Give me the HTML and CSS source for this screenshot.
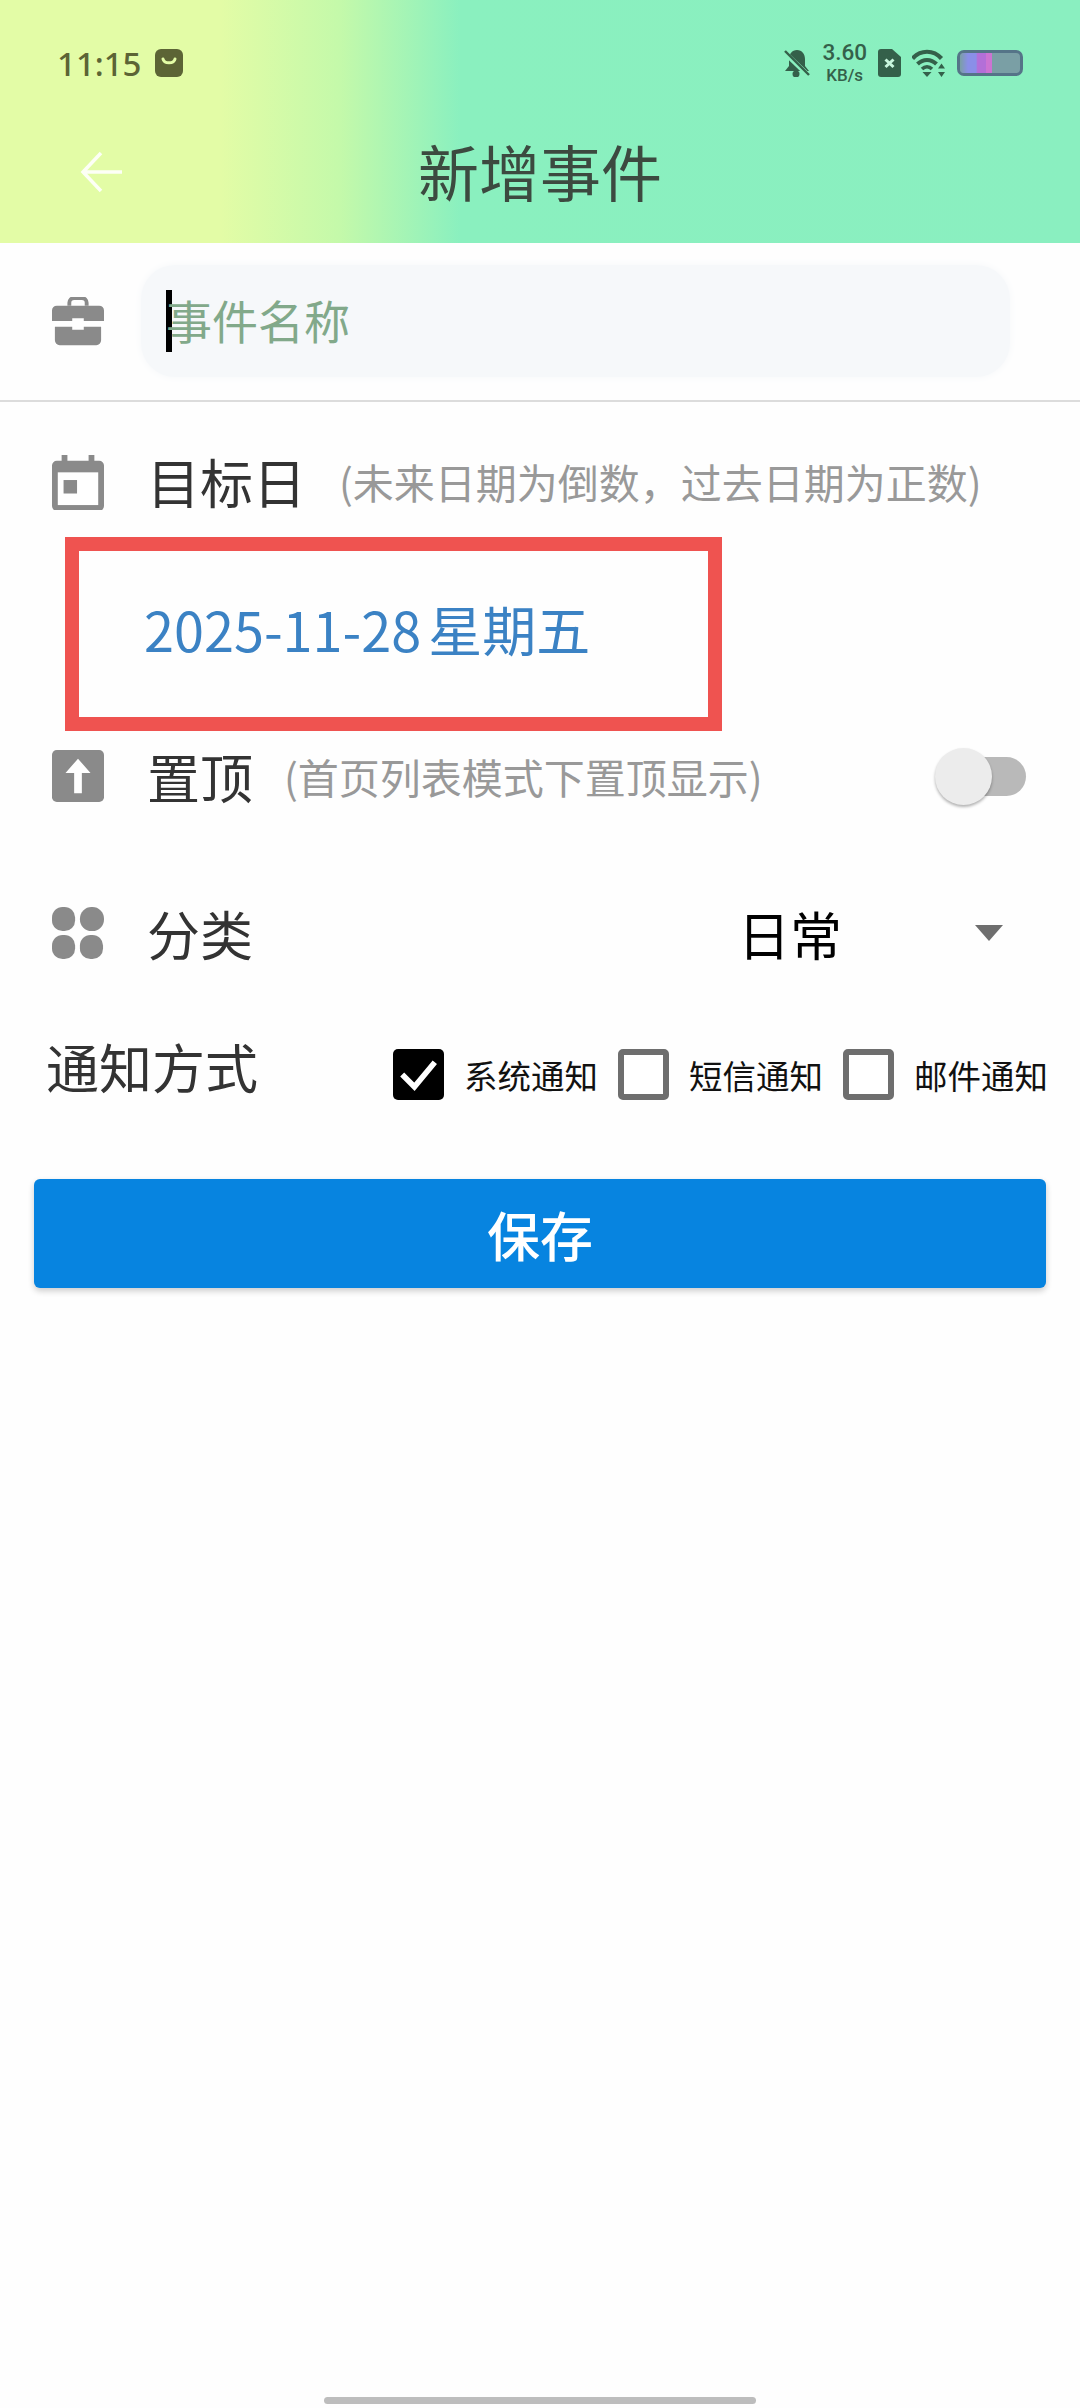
FILE: index.html
```html
<!DOCTYPE html>
<html lang="zh-CN">
<head>
    <meta charset="UTF-8">
    <meta name="viewport" content="width=device-width, initial-scale=1.0">
    <title>新增事件</title>
    <link rel="stylesheet" href="styles.css">
</head>
<body>
    <div class="header">
        <div class="status-bar">
            <div class="status-left">
                <span class="time">11:15</span>
                <svg class="bag-icon" viewBox="0 0 28 28"><rect width="28" height="28" rx="6" fill="#5c6435"/><path d="M8 10c1 5 11 5 12 0" fill="none" stroke="#e3fca6" stroke-width="3" stroke-linecap="round"/></svg>
            </div>
            <div class="status-right">
                <svg class="bell-icon" viewBox="0 0 26 28"><path d="M13 1c-5 0-8 4-8 9v7l-4 5h24l-4-5v-7c0-5-3-9-8-9z" fill="#34604a"/><circle cx="12" cy="25" r="3.5" fill="#34604a"/><path d="M0 3l25 24" stroke="#8af0bf" stroke-width="5"/><path d="M1 2l24 24" stroke="#34604a" stroke-width="2.4"/></svg>
                <div class="speed">
                    <span class="speed-num">3.60</span>
                    <span class="speed-unit">KB/s</span>
                </div>
                <svg class="sim-icon" viewBox="0 0 23 28"><path d="M3 0h11l9 8v17a3 3 0 0 1-3 3H3a3 3 0 0 1-3-3V3a3 3 0 0 1 3-3z" fill="#34604a"/><path d="M7.500 10.500l8 7.500M15.500 10.500l-8 7.500" stroke="#c8f5dd" stroke-width="3"/></svg>
                <svg class="wifi-icon" viewBox="0 0 34 28"><path d="M0.500 9.500C8.500 0.500 21.500 0.500 29.500 9.500" fill="none" stroke="#34604a" stroke-width="4.200"/><path d="M5.500 15C11 9.500 19 9.500 24.500 15" fill="none" stroke="#34604a" stroke-width="4"/><path d="M10 20c3-2.800 7-2.800 10 0" fill="none" stroke="#34604a" stroke-width="3.600"/><path d="M10.500 23h9l-4.500 5z" fill="#34604a"/><path d="M29.500 14.500l3.500 5h-7zM29.500 28l3.500-5h-7z" fill="#34604a"/></svg>
                <div class="battery">
                    <span class="battery-fill"></span>
                </div>
            </div>
        </div>
        <div class="title-bar">
            <svg class="back-icon" viewBox="0 0 44 44"><path d="M42 22H3M21 3L3 22l18 19" fill="none" stroke="#fff" stroke-opacity="0.9" stroke-width="3.500"/></svg>
            <h1 class="title">新增事件</h1>
            <span></span>
        </div>
    </div>

    <div class="name-row">
        <svg class="row-icon" viewBox="0 0 54 50"><path d="M18 9V6a5 5 0 0 1 5-5h8a5 5 0 0 1 5 5v3" fill="none" stroke="#8a8a8a" stroke-width="4"/><path d="M5 9h44a5 5 0 0 1 5 5v11H33v-3H21v3H0V14a5 5 0 0 1 5-5z" fill="#8a8a8a"/><path d="M3 31h18v3h12v-3h18v14a5 5 0 0 1-5 5H8a5 5 0 0 1-5-5z" fill="#8a8a8a"/></svg>
        <div class="name-input">
            <span class="caret"></span>
            <span class="placeholder">事件名称</span>
        </div>
    </div>

    <div class="row target-row">
        <svg class="row-icon calendar-icon" viewBox="0 0 54 58"><path d="M10 0h6v6h22V0h6v6h5a5 5 0 0 1 5 5v42a5 5 0 0 1-5 5H5a5 5 0 0 1-5-5V11a5 5 0 0 1 5-5h5z" fill="#8a8a8a"/><rect x="6" y="18" width="42" height="34" fill="#fff"/><rect x="12" y="26" width="14" height="14" fill="#8a8a8a"/></svg>
        <span class="label">目标日</span>
        <span class="hint target-hint">(未来日期为倒数，过去日期为正数)</span>
    </div>

    <div class="date-box">
        <span class="date-text">2025-11-28 星期五</span>
    </div>

    <div class="row pin-row">
        <svg class="row-icon" viewBox="0 0 54 54"><rect width="54" height="54" rx="5" fill="#8a8a8a"/><path d="M27 9l13 15h-9v21h-8V24h-9z" fill="#fff"/></svg>
        <span class="label">置顶</span>
        <span class="hint pin-hint">(首页列表模式下置顶显示)</span>
        <div class="switch">
            <span class="switch-thumb"></span>
        </div>
    </div>

    <div class="row category-row">
        <svg class="row-icon" viewBox="0 0 54 54"><rect width="24" height="25" rx="11" fill="#8a8a8a"/><rect x="29" width="25" height="25" rx="12" fill="#8a8a8a"/><rect y="29" width="24" height="25" rx="11" fill="#8a8a8a"/><rect x="29" y="29" width="24" height="25" rx="11" fill="#8a8a8a"/></svg>
        <span class="label">分类</span>
        <span class="category-value">日常</span>
        <span class="dropdown-arrow"></span>
    </div>

    <div class="notify-row">
        <span class="label notify-label">通知方式</span>
        <div class="notify-options">
            <div class="notify-option">
                <span class="checkbox checked">
                    <svg viewBox="0 0 50 50"><path d="M9 25l12 12L41 13" fill="none" stroke="#fff" stroke-width="5.500"/></svg>
                </span>
                <span class="notify-text">系统通知</span>
            </div>
            <div class="notify-option">
                <span class="checkbox"></span>
                <span class="notify-text">短信通知</span>
            </div>
            <div class="notify-option">
                <span class="checkbox"></span>
                <span class="notify-text">邮件通知</span>
            </div>
        </div>
    </div>

    <button class="save-btn">保存</button>

    <div class="home-indicator"></div>
</body>
</html>
```

FILE: styles.css
```css
body {
    font-family: "Noto Sans CJK SC", "Noto Sans", sans-serif;
    margin: 0;
    width: 1080px;
    height: 2408px;
    position: relative;
    overflow: hidden;
    background-color: #fefefe;
}
.header {
    height: 243px;
    background: linear-gradient(90deg, #e3fca6 0, #e3fca6 220px, #c4f9aa 340px, #8af0bf 460px, #8aefc0 100%);
}
.status-bar {
    height: 126px;
    display: flex;
    align-items: center;
    justify-content: space-between;
    padding: 0 57px;
}
.status-left {
    display: flex;
    align-items: center;
    gap: 14px;
}
.time {
    font-family: "Noto Sans", sans-serif;
    font-size: 33px;
    font-weight: 500;
    color: #5c6435;
}
.bag-icon {
    width: 28px;
    height: 28px;
}
.status-right {
    display: flex;
    align-items: center;
}
.bell-icon {
    width: 26px;
    height: 28px;
}
.speed {
    display: flex;
    flex-direction: column;
    align-items: center;
    margin: 0 11px 0 12px;
    font-family: Roboto, sans-serif;
    color: #34604a;
    font-weight: 500;
}
.speed-num {
    font-size: 22.500px;
    line-height: 24px;
}
.speed-unit {
    font-size: 17px;
    line-height: 23px;
}
.sim-icon {
    width: 23px;
    height: 28px;
}
.wifi-icon {
    width: 34px;
    height: 28px;
    margin-left: 11px;
}
.battery {
    width: 66px;
    height: 26px;
    margin-left: 11px;
    box-sizing: border-box;
    border: 3px solid #557488;
    border-radius: 7px;
    background-color: #7a9fa5;
    overflow: hidden;
}
.battery-fill {
    display: block;
    width: 32px;
    height: 100%;
    background: linear-gradient(90deg, #7a9fa5 0, #8a8fe8 25%, #8a8fe8 50%, #b36fd8 55%, #b36fd8 80%, #cc74d2 82%);
}
.title-bar {
    display: grid;
    grid-template-columns: 1fr auto 1fr;
    align-items: center;
    height: 100px;
}
.back-icon {
    width: 44px;
    height: 44px;
    margin: -9px 0 0 80px;
}
.title {
    margin: 0;
    padding-bottom: 10px;
    font-size: 61px;
    font-weight: 400;
    line-height: 90px;
    color: #3c4a40;
}
.name-row {
    height: 159px;
    box-sizing: border-box;
    border-bottom: 2px solid #dcdcdc;
    display: flex;
    align-items: center;
    padding: 0 70px 0 52px;
}
.row-icon {
    width: 52px;
    flex-shrink: 0;
}
.name-input {
    flex: 1;
    height: 112px;
    margin: -2px 0 0 37px;
    display: flex;
    align-items: center;
    padding-left: 25px;
    background-color: #f6f8fa;
    border-radius: 34px;
    box-shadow: 0 0 8px #f6f8fa;
}
.caret {
    width: 6px;
    height: 62px;
    background-color: #000;
}
.placeholder {
    font-size: 46px;
    color: #82a98a;
    margin: -3px 0 0 -6px;
}
.row {
    display: flex;
    align-items: center;
    padding: 0 52px;
}
.label {
    font-size: 53px;
    line-height: 60px;
    color: #333;
}
.hint {
    font-size: 41px;
    color: #999;
}
.target-row {
    height: 135px;
    box-sizing: border-box;
    padding-top: 22px;
}
.calendar-icon {
    margin-top: 4px;
}
.target-row .label {
    margin-left: 43px;
}
.target-hint {
    margin-left: 33px;
}
.date-box {
    width: 657px;
    height: 194px;
    margin-left: 65px;
    box-sizing: border-box;
    border: 14px solid #ef5350;
    display: flex;
    align-items: center;
    padding: 0 0 12px 65px;
}
.date-text {
    font-size: 54px;
    color: #3b82c4;
    word-spacing: -5px;
}
.pin-row {
    height: 90px;
}
.pin-row .label {
    margin-left: 43px;
}
.pin-hint {
    margin-left: 31px;
}
.switch {
    position: relative;
    width: 80px;
    height: 39px;
    margin-left: auto;
    margin-right: 2px;
    border-radius: 20px;
    background-color: #b9b9b9;
}
.switch-thumb {
    position: absolute;
    left: -11px;
    top: -9px;
    width: 57px;
    height: 57px;
    border-radius: 50%;
    background-color: #ececec;
    box-shadow: 0 2px 3px rgba(0,0,0,0.3);
}
.category-row {
    height: 90px;
    margin-top: 67px;
}
.category-row .label {
    margin-left: 43px;
}
.category-value {
    font-size: 52px;
    color: #000;
    margin-left: 485px;
}
.dropdown-arrow {
    width: 0;
    height: 0;
    margin: 0 0 0 133px;
    border-left: 14px solid transparent;
    border-right: 14px solid transparent;
    border-top: 16px solid #6e6e6e;
}
.notify-row {
    display: flex;
    align-items: center;
    height: 90px;
    margin-top: 51px;
    padding-left: 46px;
}
.notify-label {
    margin-bottom: 16px;
}
.notify-options {
    display: flex;
    margin-left: 135px;
    gap: 20px;
}
.notify-option {
    display: flex;
    align-items: center;
    gap: 20px;
}
.checkbox {
    width: 51px;
    height: 51px;
    box-sizing: border-box;
    border: 6px solid #6e6e6e;
    border-radius: 5px;
    background-color: #fff;
}
.checkbox.checked {
    border: 0;
    background-color: #000;
}
.checkbox svg {
    display: block;
}
.notify-text {
    font-size: 33.500px;
    color: #111;
}
.save-btn {
    display: block;
    width: 1012px;
    height: 109px;
    margin: 60px 0 0 34px;
    border: none;
    border-radius: 6px;
    background-color: #0784e0;
    color: white;
    font-family: inherit;
    font-size: 53px;
    font-weight: 500;
    box-shadow: 0 3px 6px rgba(0,0,0,0.2);
}
.home-indicator {
    position: absolute;
    left: 324px;
    bottom: 4px;
    width: 432px;
    height: 7px;
    border-radius: 4px;
    background-color: #bdbdbd;
}
```
